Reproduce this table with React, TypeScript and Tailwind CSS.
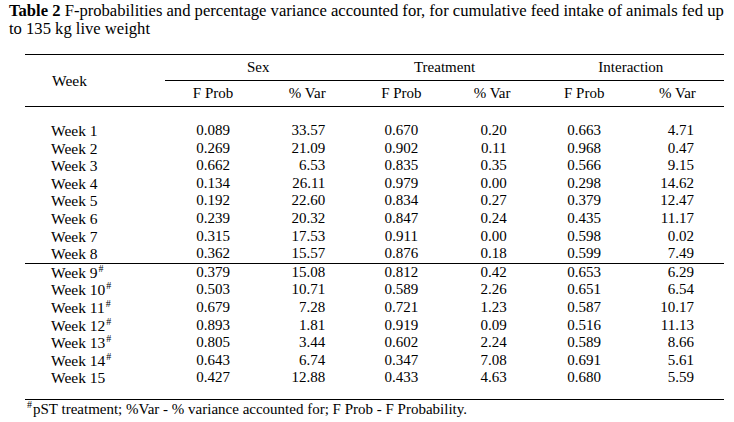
import React from 'react';

type Row = { week: string; mark?: boolean; v: string[] };

const rowsA: Row[] = [
  { week: 'Week 1', v: ['0.089', '33.57', '0.670', '0.20', '0.663', '4.71'] },
  { week: 'Week 2', v: ['0.269', '21.09', '0.902', '0.11', '0.968', '0.47'] },
  { week: 'Week 3', v: ['0.662', '6.53', '0.835', '0.35', '0.566', '9.15'] },
  { week: 'Week 4', v: ['0.134', '26.11', '0.979', '0.00', '0.298', '14.62'] },
  { week: 'Week 5', v: ['0.192', '22.60', '0.834', '0.27', '0.379', '12.47'] },
  { week: 'Week 6', v: ['0.239', '20.32', '0.847', '0.24', '0.435', '11.17'] },
  { week: 'Week 7', v: ['0.315', '17.53', '0.911', '0.00', '0.598', '0.02'] },
  { week: 'Week 8', v: ['0.362', '15.57', '0.876', '0.18', '0.599', '7.49'] },
];

const rowsB: Row[] = [
  { week: 'Week 9', mark: true, v: ['0.379', '15.08', '0.812', '0.42', '0.653', '6.29'] },
  { week: 'Week 10', mark: true, v: ['0.503', '10.71', '0.589', '2.26', '0.651', '6.54'] },
  { week: 'Week 11', mark: true, v: ['0.679', '7.28', '0.721', '1.23', '0.587', '10.17'] },
  { week: 'Week 12', mark: true, v: ['0.893', '1.81', '0.919', '0.09', '0.516', '11.13'] },
  { week: 'Week 13', mark: true, v: ['0.805', '3.44', '0.602', '2.24', '0.589', '8.66'] },
  { week: 'Week 14', mark: true, v: ['0.643', '6.74', '0.347', '7.08', '0.691', '5.61'] },
  { week: 'Week 15', v: ['0.427', '12.88', '0.433', '4.63', '0.680', '5.59'] },
];

// cell alignment per value column (F Prob centred, % Var right-aligned)
const cellCls = [
  'text-center pl-[3px]',
  'text-right pr-[26px]',
  'text-center pl-[7px]',
  'text-right pr-[31px]',
  'text-center',
  'text-right pr-[30px]',
];

function DataRow({ row }: { row: Row }) {
  return (
    <div className="grid grid-cols-[140px_repeat(6,1fr)] h-[17.6px] items-center">
      <div className="pl-[26px] whitespace-nowrap text-[15.5px]">
        {row.week}
        {row.mark && <sup className="text-[10px] -top-[6px] ml-[1px]">#</sup>}
      </div>
      {row.v.map((val, i) => (
        <div key={i} className={cellCls[i]}>
          {val}
        </div>
      ))}
    </div>
  );
}

export default function App() {
  return (
    <div className="w-[734px] h-[422px] bg-white text-black font-['Liberation_Serif','Times_New_Roman',serif] overflow-hidden">
      <p className="pl-[9px] pt-[2px] text-[16.6px] leading-[18px] whitespace-nowrap">
        <b>Table 2</b> F-probabilities and percentage variance accounted for, for cumulative feed intake of animals fed up
        <br />
        to 135 kg live weight
      </p>

      <div className="ml-[25px] mt-[16px] w-[699px] text-[15px] leading-[17.6px]">
        {/* header */}
        <div className="grid grid-cols-[140px_repeat(6,1fr)] border-t border-b border-black">
          <div className="row-span-2 flex items-center pl-[27px] text-[15.5px]">Week</div>
          <div className="col-span-2 h-[26px] flex items-center justify-center border-b border-black">Sex</div>
          <div className="col-span-2 h-[26px] flex items-center justify-center border-b border-black">Treatment</div>
          <div className="col-span-2 h-[26px] flex items-center justify-center border-b border-black">Interaction</div>
          <div className="h-[25px] flex items-center justify-center pl-[3px]">F Prob</div>
          <div className="h-[25px] flex items-center justify-center pl-[5px]">% Var</div>
          <div className="h-[25px] flex items-center justify-center pl-[7px]">F Prob</div>
          <div className="h-[25px] flex items-center justify-center pl-[2px]">% Var</div>
          <div className="h-[25px] flex items-center justify-center">F Prob</div>
          <div className="h-[25px] flex items-center justify-center">% Var</div>
        </div>

        <div className="h-[15px]" />
        {rowsA.map((r) => (
          <DataRow key={r.week} row={r} />
        ))}
        <div className="border-t border-black">
          {rowsB.map((r) => (
            <DataRow key={r.week} row={r} />
          ))}
        </div>
        <div className="h-[13px] border-b border-black" />
      </div>

      <p className="pl-[27px] pt-[1px] text-[15px] leading-[17.6px]">
        <sup className="text-[10px] -top-[6px] mr-[1px]">#</sup>
        pST treatment; %Var - % variance accounted for; F Prob - F Probability.
      </p>
    </div>
  );
}
